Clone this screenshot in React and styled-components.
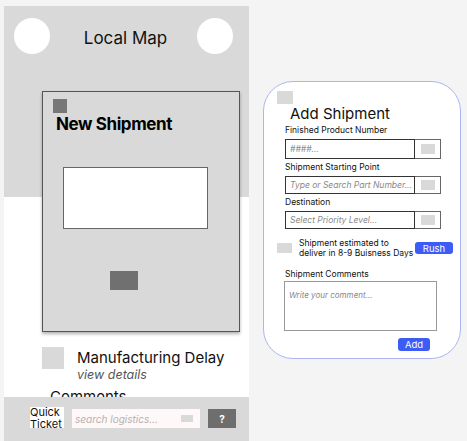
import React from 'react';
import styled, { createGlobalStyle } from 'styled-components';

const GlobalStyle = createGlobalStyle`
body {
  margin: 0;
  background: #f4f4f4;
  font-family: Inter, "Noto Sans", sans-serif;
}`

const App = () => {
  return (
    <>
      <GlobalStyle />
      <Page>
        <Phone>
          <Screen>
            <Header>
              <Circle />
              <Title>Local Map</Title>
              <Circle />
            </Header>
            <ShipmentCard>
              <Thumb />
              <CardTitle>New Shipment</CardTitle>
              <WhiteBox />
              <DarkButton />
            </ShipmentCard>
            <AlertRow>
              <AlertIcon />
              <AlertText>
                <AlertTitle>Manufacturing Delay</AlertTitle>
                <AlertLink>view details</AlertLink>
              </AlertText>
            </AlertRow>
            <SectionTitle>Comments</SectionTitle>
          </Screen>
          <Footer>
            <QuickTicket>Quick Ticket</QuickTicket>
            <Search>
              <SearchText>search logistics...</SearchText>
              <SearchChip />
            </Search>
            <HelpButton>?</HelpButton>
          </Footer>
        </Phone>

        <FormCard>
          <FormIcon />
          <FormTitle>Add Shipment</FormTitle>
          <Label>Finished Product Number</Label>
          <Field $h={20}>
            <FieldInput>####...</FieldInput>
            <FieldSide><Chip /></FieldSide>
          </Field>
          <Label $top={3}>Shipment Starting Point</Label>
          <Field>
            <FieldInput>Type or Search Part Number...</FieldInput>
            <FieldSide><Chip /></FieldSide>
          </Field>
          <Label $top={3}>Destination</Label>
          <Field>
            <FieldInput>Select Priority Level...</FieldInput>
            <FieldSide><Chip /></FieldSide>
          </Field>
          <RushRow>
            <Check />
            <RushText>Shipment estimated to<br />deliver in 8-9 Buisness Days</RushText>
            <BlueButton $w={38}>Rush</BlueButton>
          </RushRow>
          <Label $top={11}>Shipment Comments</Label>
          <Comment>Write your comment...</Comment>
          <Actions>
            <BlueButton $w={32} $h={13}>Add</BlueButton>
          </Actions>
        </FormCard>
      </Page>
    </>
  )
}

const Page = styled.div`
display: flex;
align-items: flex-start;
height: 441px;
overflow: hidden;`

const Phone = styled.div`
margin: 6px 0 0 4px;
width: 245px;
height: 435px;
display: flex;
flex-direction: column;
background: linear-gradient(#d9d9d9 0 191px, #ffffff 191px);`

const Screen = styled.div`
height: 391px;
overflow: hidden;`

const Header = styled.div`
display: flex;
justify-content: space-between;
align-items: center;
padding: 12px 16px 0 10px;`

const Circle = styled.div`
width: 36px;
height: 36px;
border-radius: 50%;
background: #ffffff;`

const Title = styled.div`
font-size: 17px;
color: #111;
margin: 3px 0 0 4px;`

const ShipmentCard = styled.div`
margin: 37px 0 0 38px;
width: 186px;
height: 232px;
border: 1px solid #555;
background: #d9d9d9;
box-shadow: 0 2px 3px rgba(0, 0, 0, 0.3);
padding: 7px 0 0 10px;
box-sizing: content-box;`

const Thumb = styled.div`
width: 14px;
height: 14px;
background: #777777;`

const CardTitle = styled.div`
font-size: 17px;
font-weight: 700;
letter-spacing: -0.4px;
color: #000;
margin: 1px 0 0 3px;
line-height: 20px;`

const WhiteBox = styled.div`
margin: 33px 0 0 10px;
width: 143px;
height: 60px;
background: #fff;
border: 1px solid #666;`

const DarkButton = styled.div`
margin: 42px 0 0 57px;
width: 28px;
height: 19px;
background: #707070;`

const AlertRow = styled.div`
display: flex;
margin: 15px 0 0 38px;
gap: 13px;`

const AlertIcon = styled.div`
width: 22px;
height: 22px;
background: #d9d9d9;`

const AlertText = styled.div`
display: flex;
flex-direction: column;
padding-top: 2px;`

const AlertTitle = styled.div`
font-size: 15px;
color: #111;
line-height: 18px;`

const AlertLink = styled.div`
font-size: 12.5px;
font-style: italic;
color: #555;
line-height: 16px;`

const SectionTitle = styled.div`
font-size: 15px;
color: #111;
line-height: 18px;
margin: 5px 0 0 46px;`

const Footer = styled.div`
flex: 1;
background: #d9d9d9;
display: flex;
align-items: flex-start;
padding: 10px 0 0 26px;`

const QuickTicket = styled.div`
width: 34px;
height: 21px;
background: #fff;
font-size: 11px;
line-height: 11.5px;
color: #111;
overflow: hidden;
box-sizing: border-box;`

const Search = styled.div`
margin: 2px 0 0 8px;
width: 128px;
height: 19px;
background: #fff8f8;
display: flex;
align-items: center;
justify-content: space-between;
padding: 0 7px 0 3px;
box-sizing: border-box;`

const SearchText = styled.span`
font-size: 10px;
font-style: italic;
color: #b8b0b0;`

const SearchChip = styled.div`
width: 12px;
height: 7px;
background: #d9d9d9;`

const HelpButton = styled.div`
margin: 2px 0 0 8px;
width: 28px;
height: 19px;
background: #6e6e6e;
color: #fff;
font-size: 10px;
font-weight: 700;
display: flex;
align-items: center;
justify-content: center;`

const FormCard = styled.div`
margin: 81px 0 0 14px;
width: 198px;
height: 278px;
box-sizing: border-box;
background: #fff;
border: 1px solid #aab6f2;
border-radius: 30px;
padding: 9px 0 0 21px;
display: flex;
flex-direction: column;`

const FormIcon = styled.div`
width: 16px;
height: 13px;
background: #d9d9d9;
margin-left: -8px;`

const FormTitle = styled.div`
font-size: 15px;
color: #111;
margin: 1px 0 0 5px;
line-height: 18px;`

const Label = styled.div`
font-size: 8.5px;
color: #111;
margin-top: ${p => p.$top || 2}px;
line-height: 11px;`

const Field = styled.div`
display: flex;
margin-top: 3px;
width: 156px;
height: ${p => p.$h || 18}px;`

const FieldInput = styled.div`
flex: 1;
border: 1.5px solid #333;
font-size: 8.5px;
font-style: italic;
color: #888;
display: flex;
align-items: center;
padding-left: 4px;`

const FieldSide = styled.div`
width: 25px;
border: 1px solid #666;
border-left: none;
display: flex;
align-items: center;
justify-content: center;`

const Chip = styled.div`
width: 14px;
height: 10px;
background: #d9d9d9;`

const RushRow = styled.div`
display: flex;
align-items: center;
margin: 9px 0 0 -8px;`

const Check = styled.div`
width: 15px;
height: 10px;
background: #d9d9d9;`

const RushText = styled.div`
font-size: 8.5px;
line-height: 10px;
color: #111;
margin-left: 7px;
flex: 0 0 116px;`

const BlueButton = styled.div`
width: ${p => p.$w}px;
height: ${p => p.$h || 12}px;
border-radius: 3px;
background: #3d5bf5;
color: #fff;
font-size: 9.5px;
display: flex;
align-items: center;
justify-content: center;`

const Comment = styled.div`
margin-top: 1px;
width: 153px;
height: 50px;
box-sizing: border-box;
border: 1px solid #999;
font-size: 8px;
font-style: italic;
color: #888;
padding: 8px 4px;
margin-left: -1px;`

const Actions = styled.div`
display: flex;
justify-content: flex-end;
width: 145px;
margin-top: 7px;`

export default App;
